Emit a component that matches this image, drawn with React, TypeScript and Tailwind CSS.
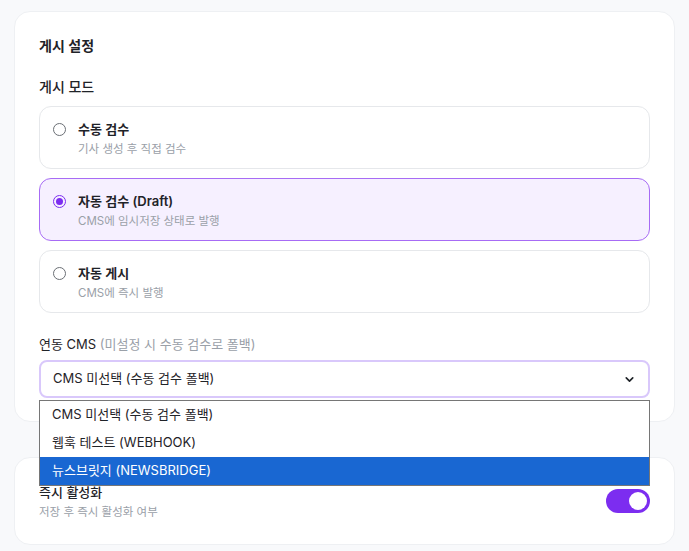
import { ChevronDown } from "lucide-react";

const modes = [
  { title: "수동 검수", desc: "기사 생성 후 직접 검수", active: false },
  { title: "자동 검수 (Draft)", desc: "CMS에 임시저장 상태로 발행", active: true },
  { title: "자동 게시", desc: "CMS에 즉시 발행", active: false },
];

const options = ["CMS 미선택 (수동 검수 폴백)", "웹훅 테스트 (WEBHOOK)", "뉴스브릿지 (NEWSBRIDGE)"];

export default function App() {
  return (
    <div
      className="min-h-[551px] bg-[#f8f9fb] px-[14px] pt-[11px] text-[#1f2328]"
      style={{ fontFamily: 'Inter, "Noto Sans CJK KR", sans-serif' }}
    >
      <div className="relative z-10 rounded-2xl border border-[#eef0f3] bg-white px-[24px] pb-[23px] pt-[24px]">
        <h2 className="text-[14px] font-semibold leading-[20px]">게시 설정</h2>
        <div className="mt-[21px] text-[14px] font-medium leading-[20px]">게시 모드</div>
        <div className="mt-[9px] flex flex-col gap-[9px]">
          {modes.map((m) => (
            <div
              key={m.title}
              className={
                "flex h-[63px] items-start gap-[12px] rounded-xl border px-[13px] pt-[13px] " +
                (m.active ? "border-[#a76bf5] bg-[#f6f0ff]" : "border-[#e6e8eb] bg-white")
              }
            >
              <span
                className={
                  "mt-[3px] flex h-[13px] w-[13px] items-center justify-center rounded-full border " +
                  (m.active ? "border-[#7c2df0]" : "border-[#6b6f75]")
                }
              >
                {m.active && <span className="h-[7px] w-[7px] rounded-full bg-[#7c2df0]" />}
              </span>
              <div>
                <div className="text-[13px] font-semibold leading-[18px]">{m.title}</div>
                <div className="mt-[3px] text-[11.5px] leading-[16px] text-[#9aa0a8]">{m.desc}</div>
              </div>
            </div>
          ))}
        </div>
        <div className="mt-[21px] text-[13px] leading-[20px]">
          연동 CMS <span className="text-[#9aa0a8]">(미설정 시 수동 검수로 폴백)</span>
        </div>
        <div className="relative mt-[6px]">
          <div className="flex h-[38px] items-center justify-between rounded-lg border-2 border-[#d9c8fb] px-[12px] text-[13px]">
            <span>CMS 미선택 (수동 검수 폴백)</span>
            <ChevronDown className="h-[13px] w-[13px]" strokeWidth={3} />
          </div>
          <div className="absolute left-0 right-0 top-[40px] border border-[#767676] bg-white text-[13px]">
            {options.map((o, i) => (
              <div
                key={o}
                className={
                  "flex h-[28px] items-center px-[12px] " + (i === 2 ? "bg-[#1967d2] text-white" : "")
                }
              >
                {o}
              </div>
            ))}
          </div>
        </div>
      </div>
      <div className="mt-[35px] flex items-center justify-between rounded-2xl border border-[#eef0f3] bg-white px-[24px] pb-[24px] pt-[24px]">
        <div>
          <div className="text-[13px] font-medium leading-[20px]">즉시 활성화</div>
          <div className="mt-[2px] text-[11.5px] leading-[16px] text-[#9aa0a8]">저장 후 즉시 활성화 여부</div>
        </div>
        <div className="flex h-[24px] w-[44px] items-center justify-end rounded-full bg-[#7c2df0] px-[3px]">
          <span className="h-[18px] w-[18px] rounded-full bg-white" />
        </div>
      </div>
    </div>
  );
}
